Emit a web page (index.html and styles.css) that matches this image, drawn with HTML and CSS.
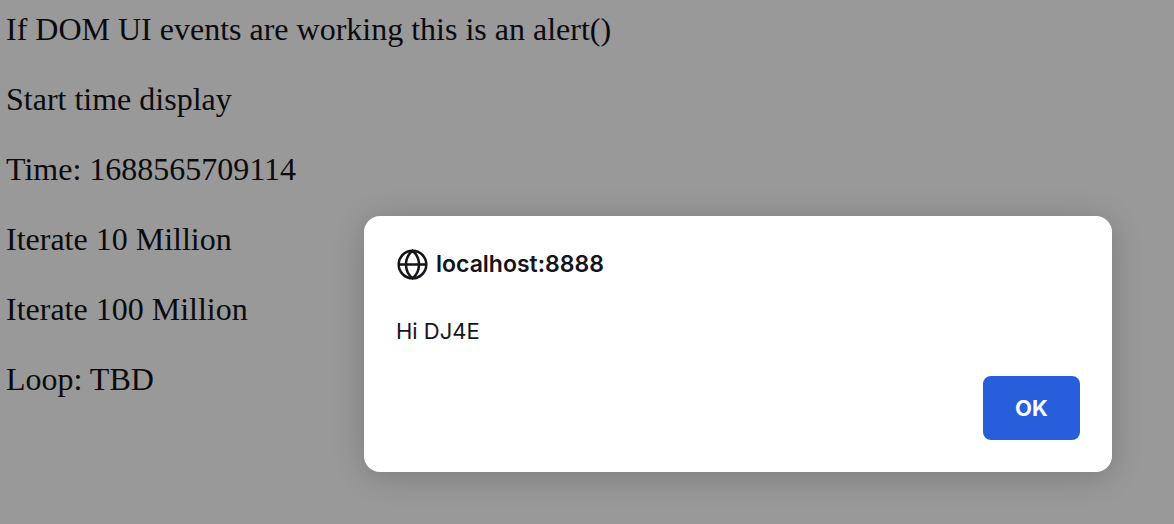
FILE: index.html
```html
<!DOCTYPE html>
<html lang="en">
<head>
<meta charset="utf-8">
<title>DOM events</title>
<link rel="stylesheet" href="styles.css">
</head>
<body>
<main class="page">
  <p>If DOM UI events are working this is an alert()</p>
  <p>Start time display</p>
  <p>Time: <span>1688565709114</span></p>
  <p>Iterate 10 Million</p>
  <p>Iterate 100 Million</p>
  <p>Loop: <span>TBD</span></p>
</main>
<div class="overlay">
  <div class="dialog" role="alertdialog" aria-labelledby="origin" aria-describedby="message">
    <header class="dialog-header">
      <svg class="globe" viewBox="0 0 32 32" aria-hidden="true">
        <circle cx="16.5" cy="16.5" r="13.8"/>
        <path d="M16.5 2.7C7.8 10 7.8 23 16.5 30.3C25.2 23 25.2 10 16.5 2.7ZM2.7 16.5H30.3"/>
      </svg>
      <h1 class="origin" id="origin">localhost:8888</h1>
    </header>
    <p class="message" id="message">Hi DJ4E</p>
    <button class="ok" type="button">OK</button>
  </div>
</div>
</body>
</html>
```

FILE: styles.css
```css
* {
  box-sizing: border-box;
}

body {
  margin: 0;
  min-height: 100vh;
  background: #99999a;
  color: #0b0b0d;
}

.page {
  display: flex;
  flex-direction: column;
  gap: 34px;
  padding: 11px 6px;
  font: 32px/36px "Liberation Serif", "Times New Roman", serif;
}

.page p {
  margin: 0;
}

.overlay {
  position: absolute;
  inset: 0;
  display: flex;
  justify-content: flex-end;
  align-items: flex-start;
  padding: 216px 62px 0;
}

.dialog {
  display: flex;
  flex-direction: column;
  width: 100%;
  max-width: 748px;
  padding: 32px;
  border-radius: 16px;
  background: #fff;
  box-shadow: 0 4px 32px rgb(0 0 0 / 20%);
  color: #15141a;
  font: 22px/32px Inter, sans-serif;
}

.dialog-header {
  display: flex;
  align-items: center;
  gap: 8px;
}

.globe {
  width: 32px;
  height: 32px;
  fill: none;
  stroke: currentColor;
  stroke-width: 2.5;
}

.origin {
  margin: 0;
  font-size: 23px;
  font-weight: 600;
  line-height: 32px;
}

.message {
  margin: 35px 0 29px;
}

.ok {
  align-self: flex-end;
  min-width: 97px;
  min-height: 64px;
  padding: 0 32px;
  border: 0;
  border-radius: 8px;
  background: #265edb;
  color: #fbfbfe;
  font: 700 22px/32px Inter, sans-serif;
}
```
